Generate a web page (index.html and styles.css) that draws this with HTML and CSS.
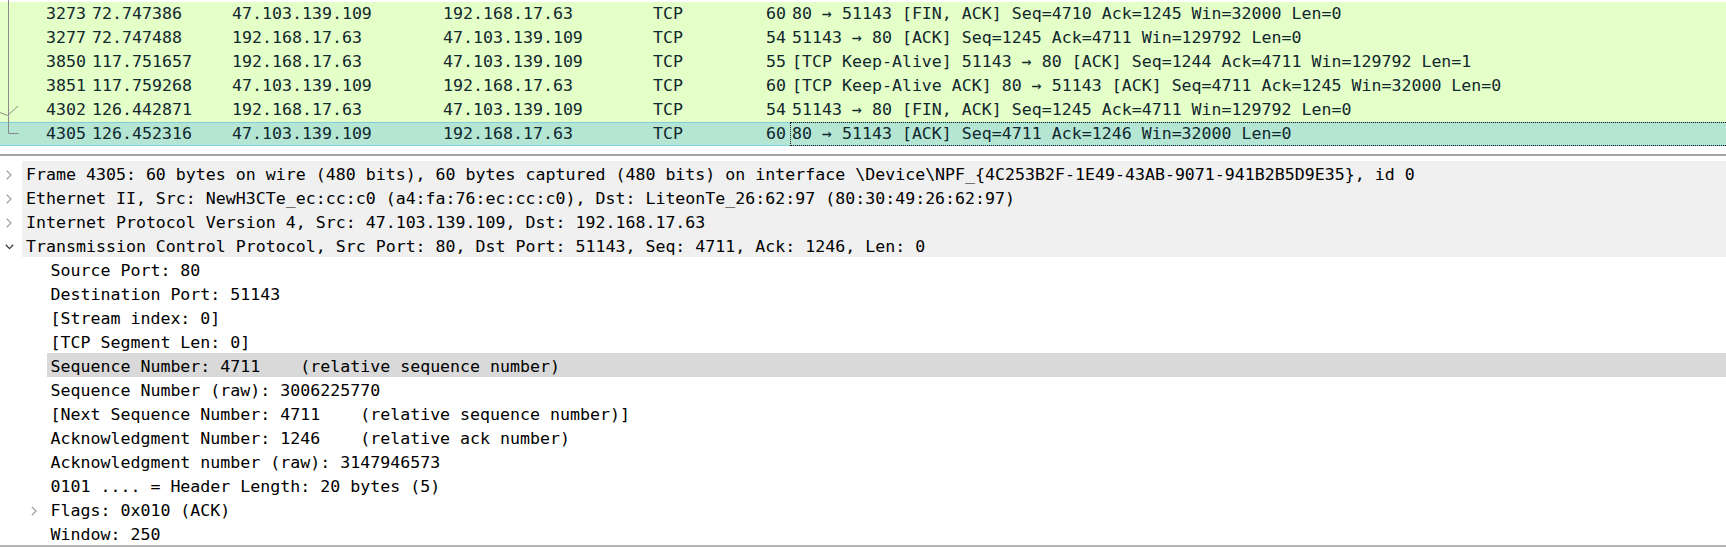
FILE: index.html
```html
<!DOCTYPE html>
<html>
<head>
<meta charset="utf-8">
<title>Wireshark</title>
<link rel="stylesheet" href="styles.css">
</head>
<body>
<div class="app">
  <div class="packet-list">
    <svg class="related" width="24" height="146" viewBox="0 0 24 146">
      <path d="M8.5 0 V133.5 H18.5" fill="none" stroke="#8a8a8a" stroke-width="1"/>
      <path d="M0 112.5 L7.5 115.5 L18 106" fill="none" stroke="#8a8a8a" stroke-width="1"/>
    </svg>
    <div class="prow"><span class="c-no">3273</span><span class="c-time">72.747386</span><span class="c-src">47.103.139.109</span><span class="c-dst">192.168.17.63</span><span class="c-proto">TCP</span><span class="c-len">60</span><span class="c-info">80 → 51143 [FIN, ACK] Seq=4710 Ack=1245 Win=32000 Len=0</span></div>
    <div class="prow"><span class="c-no">3277</span><span class="c-time">72.747488</span><span class="c-src">192.168.17.63</span><span class="c-dst">47.103.139.109</span><span class="c-proto">TCP</span><span class="c-len">54</span><span class="c-info">51143 → 80 [ACK] Seq=1245 Ack=4711 Win=129792 Len=0</span></div>
    <div class="prow"><span class="c-no">3850</span><span class="c-time">117.751657</span><span class="c-src">192.168.17.63</span><span class="c-dst">47.103.139.109</span><span class="c-proto">TCP</span><span class="c-len">55</span><span class="c-info">[TCP Keep-Alive] 51143 → 80 [ACK] Seq=1244 Ack=4711 Win=129792 Len=1</span></div>
    <div class="prow"><span class="c-no">3851</span><span class="c-time">117.759268</span><span class="c-src">47.103.139.109</span><span class="c-dst">192.168.17.63</span><span class="c-proto">TCP</span><span class="c-len">60</span><span class="c-info">[TCP Keep-Alive ACK] 80 → 51143 [ACK] Seq=4711 Ack=1245 Win=32000 Len=0</span></div>
    <div class="prow"><span class="c-no">4302</span><span class="c-time">126.442871</span><span class="c-src">192.168.17.63</span><span class="c-dst">47.103.139.109</span><span class="c-proto">TCP</span><span class="c-len">54</span><span class="c-info">51143 → 80 [FIN, ACK] Seq=1245 Ack=4711 Win=129792 Len=0</span></div>
    <div class="prow selected"><span class="c-no">4305</span><span class="c-time">126.452316</span><span class="c-src">47.103.139.109</span><span class="c-dst">192.168.17.63</span><span class="c-proto">TCP</span><span class="c-len">60</span><span class="c-info">80 → 51143 [ACK] Seq=4711 Ack=1246 Win=32000 Len=0</span></div>
  </div>

  <div class="splitter"><div class="splitter-line"></div></div>

  <div class="tree">
    <div class="trow lvl0 shaded"><span class="tog"><svg class="chev" width="6" height="10" viewBox="0 0 6 10"><path d="M0.8 0.8 L5 5 L0.8 9.2" fill="none" stroke="#a3a3a3" stroke-width="1.3"/></svg></span><span class="lbl">Frame 4305: 60 bytes on wire (480 bits), 60 bytes captured (480 bits) on interface \Device\NPF_{4C253B2F-1E49-43AB-9071-941B2B5D9E35}, id 0</span></div>
    <div class="trow lvl0 shaded"><span class="tog"><svg class="chev" width="6" height="10" viewBox="0 0 6 10"><path d="M0.8 0.8 L5 5 L0.8 9.2" fill="none" stroke="#a3a3a3" stroke-width="1.3"/></svg></span><span class="lbl">Ethernet II, Src: NewH3CTe_ec:cc:c0 (a4:fa:76:ec:cc:c0), Dst: LiteonTe_26:62:97 (80:30:49:26:62:97)</span></div>
    <div class="trow lvl0 shaded"><span class="tog"><svg class="chev" width="6" height="10" viewBox="0 0 6 10"><path d="M0.8 0.8 L5 5 L0.8 9.2" fill="none" stroke="#a3a3a3" stroke-width="1.3"/></svg></span><span class="lbl">Internet Protocol Version 4, Src: 47.103.139.109, Dst: 192.168.17.63</span></div>
    <div class="trow lvl0 shaded"><span class="tog"><svg class="chev-down" width="9" height="6" viewBox="0 0 9 6"><path d="M0.8 0.8 L4.5 4.6 L8.2 0.8" fill="none" stroke="#3c3c3c" stroke-width="1.3"/></svg></span><span class="lbl">Transmission Control Protocol, Src Port: 80, Dst Port: 51143, Seq: 4711, Ack: 1246, Len: 0</span></div>
    <div class="trow lvl1"><span class="tog"></span><span class="lbl">Source Port: 80</span></div>
    <div class="trow lvl1"><span class="tog"></span><span class="lbl">Destination Port: 51143</span></div>
    <div class="trow lvl1"><span class="tog"></span><span class="lbl">[Stream index: 0]</span></div>
    <div class="trow lvl1"><span class="tog"></span><span class="lbl">[TCP Segment Len: 0]</span></div>
    <div class="trow lvl1 sel"><span class="tog"></span><span class="lbl">Sequence Number: 4711    (relative sequence number)</span></div>
    <div class="trow lvl1"><span class="tog"></span><span class="lbl">Sequence Number (raw): 3006225770</span></div>
    <div class="trow lvl1"><span class="tog"></span><span class="lbl">[Next Sequence Number: 4711    (relative sequence number)]</span></div>
    <div class="trow lvl1"><span class="tog"></span><span class="lbl">Acknowledgment Number: 1246    (relative ack number)</span></div>
    <div class="trow lvl1"><span class="tog"></span><span class="lbl">Acknowledgment number (raw): 3147946573</span></div>
    <div class="trow lvl1"><span class="tog"></span><span class="lbl">0101 .... = Header Length: 20 bytes (5)</span></div>
    <div class="trow lvl1"><span class="tog"><svg class="chev" width="6" height="10" viewBox="0 0 6 10"><path d="M0.8 0.8 L5 5 L0.8 9.2" fill="none" stroke="#a3a3a3" stroke-width="1.3"/></svg></span><span class="lbl">Flags: 0x010 (ACK)</span></div>
    <div class="trow lvl1"><span class="tog"></span><span class="lbl">Window: 250</span></div>
  </div>
  <div class="bottom-line"></div>
</div>
</body>
</html>
```

FILE: styles.css
```css
html, body {
  margin: 0;
  padding: 0;
  background: #ffffff;
}

body {
  width: 1726px;
  height: 548px;
  overflow: hidden;
  font-family: "DejaVu Sans Mono", "Liberation Mono", monospace;
  font-size: 16.6px;
  color: #000000;
}

.app {
  display: flex;
  flex-direction: column;
}

/* ---------- packet list ---------- */
.packet-list {
  position: relative;
  padding-top: 2px;
}

.related {
  position: absolute;
  left: 0;
  top: 0;
}

.prow {
  display: grid;
  grid-template-columns: 88px 140px 211px 210px 71px 70px 1fr;
  height: 24px;
  line-height: 24px;
  background: #e4ffc7;
  color: #12272e;
  white-space: pre;
}

.prow > span {
  padding-left: 4px;
  overflow: hidden;
}

.prow > .c-no {
  text-align: right;
  padding-left: 0;
  padding-right: 2px;
}

.prow > .c-len {
  text-align: right;
  padding-left: 0;
  padding-right: 4px;
}

.prow > .c-info {
  padding-left: 2px;
}

.prow.selected {
  background: #b4e6d3;
  box-shadow: inset 0 1px 0 #80cfe0, inset 0 -1px 0 #80cfe0;
}

.prow.selected > .c-info {
  border: 1px dotted #1a1a1a;
  border-right: none;
  padding-left: 1px;
  line-height: 22px;
}

/* ---------- splitter ---------- */
.splitter {
  height: 15px;
  padding-top: 8px;
  box-sizing: border-box;
}

.splitter-line {
  height: 2px;
  background: #a6a6a6;
}

/* ---------- detail tree ---------- */
.tree {
  display: flex;
  flex-direction: column;
}

.trow {
  display: flex;
  height: 24px;
}

.trow.lvl1 {
  padding-left: 24.5px;
}

.tog {
  flex: none;
  width: 22px;
  height: 24px;
  box-sizing: border-box;
  padding-top: 4px;
  padding-left: 6px;
  display: flex;
  align-items: center;
}

.tog .chev-down {
  margin-left: -1.5px;
}

.lbl {
  flex: 1;
  height: 24px;
  box-sizing: border-box;
  padding-left: 4px;
  padding-top: 4px;
  line-height: 20px;
  white-space: pre;
}

.trow.shaded .lbl {
  background: #f0f0f0;
}

.trow.sel .lbl {
  background: #d9d9d9;
}

.bottom-line {
  height: 2px;
  background: #b4b4b4;
}
```
